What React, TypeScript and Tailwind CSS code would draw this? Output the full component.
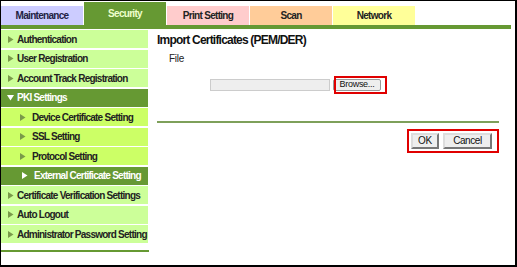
import React from 'react';

const tabs = [
  { label: 'Maintenance', cls: 'h-[19px] bg-[#ccccff] text-[#222244]' },
  { label: 'Security', cls: 'h-[23px] bg-[#669933] text-[#eeffcc]' },
  { label: 'Print Setting', cls: 'h-[19px] bg-[#ffcccc] text-[#222222]' },
  { label: 'Scan', cls: 'h-[19px] bg-[#ffcc99] text-[#222222]' },
  { label: 'Network', cls: 'h-[19px] bg-[#ffff99] text-[#222222]' },
];

type Item = { label: string; kind: 'top' | 'open' | 'sub' | 'active' };

const menu: Item[] = [
  { label: 'Authentication', kind: 'top' },
  { label: 'User Registration', kind: 'top' },
  { label: 'Account Track Registration', kind: 'top' },
  { label: 'PKI Settings', kind: 'open' },
  { label: 'Device Certificate Setting', kind: 'sub' },
  { label: 'SSL Setting', kind: 'sub' },
  { label: 'Protocol Setting', kind: 'sub' },
  { label: 'External Certificate Setting', kind: 'active' },
  { label: 'Certificate Verification Settings', kind: 'top' },
  { label: 'Auto Logout', kind: 'top' },
  { label: 'Administrator Password Setting', kind: 'top' },
];

const Arrow = ({ down, color }: { down?: boolean; color: string }) => (
  <svg width="7" height="7" viewBox="0 0 7 7" className="shrink-0">
    {down ? <polygon points="0,1 7,1 3.5,6.5" fill={color} /> : <polygon points="1,0 6.5,3.5 1,7" fill={color} />}
  </svg>
);

const MenuRow = ({ item }: { item: Item }) => {
  const styles = {
    top: 'bg-[#ccff99] text-[#222222] pl-[6px]',
    open: 'bg-[#669933] text-white pl-[6px]',
    sub: 'bg-[#ccff66] text-[#222222] pl-[18px]',
    active: 'bg-[#669933] text-white pl-[20px]',
  }[item.kind];
  const arrowColor = item.kind === 'open' || item.kind === 'active' ? '#ffffff' : '#7a9a4a';
  return (
    <div className={`h-[18px] flex items-center gap-[3px] whitespace-nowrap overflow-hidden ${styles}`}>
      <Arrow down={item.kind === 'open'} color={arrowColor} />
      <span className={item.kind === 'sub' || item.kind === 'active' ? 'ml-[3px]' : ''}>{item.label}</span>
    </div>
  );
};

export default function App() {
  return (
    <div className="w-[517px] h-[267px] overflow-hidden bg-white border-l border-t border-r-2 border-b-2 border-black font-['Liberation_Sans',Arial,sans-serif]">
      <div className="flex items-end gap-px h-[24px]">
        {tabs.map((t) => (
          <div key={t.label} className={`w-[82px] flex items-center justify-center text-[10px] tracking-[-0.7px] font-bold ${t.cls}`}>
            {t.label}
          </div>
        ))}
      </div>
      <div className="h-[4px] mr-[4px] bg-[#669933]" />
      <div className="flex mt-px">
        <div className="w-[147px] shrink-0">
          <div className="flex flex-col gap-[1.5px] text-[10px] tracking-[-0.75px] font-bold">
            {menu.map((m) => (
              <MenuRow key={m.label} item={m} />
            ))}
          </div>
          <div className="mt-[7px] h-[2px] w-[148px] bg-[#669933]" />
        </div>
        <div className="ml-[9px] w-[342px] pt-[3px]">
          <div className="text-[12px] leading-[15px] tracking-[-0.8px] font-bold text-[#111111]">Import Certificates (PEM/DER)</div>
          <div className="mt-[4px] ml-[12px] text-[10px] leading-[13px] tracking-[-0.3px] text-[#222222]">File</div>
          <div className="mt-[13px] flex items-center h-[13px]">
            <div className="ml-[53px] w-[120px] h-[12px] bg-[#eeeeee] border border-[#cccccc]" />
            <div className="relative ml-[3px]">
              <div className="w-[48px] h-[12px] flex items-center justify-center bg-[#eeeeee] border border-[#999999] rounded-[2px] text-[9px] tracking-[-0.3px] text-[#111111]">
                Browse...
              </div>
              <div className="absolute -top-[3px] left-px w-[53px] h-[18px] border-2 border-[#e00000]" />
            </div>
          </div>
          <div className="mt-[30px] h-[2px] bg-[#7ea05a]" />
          <div className="mt-[6px] flex justify-end">
            <div className="w-[92px] h-[24px] border-2 border-[#e00000] flex items-center justify-end gap-[4px] pr-[5px]">
              <button className="w-[28px] h-[16px] bg-[#eeeeee] border-2 border-t-[#dddddd] border-l-[#dddddd] border-r-[#777777] border-b-[#777777] text-[10px] tracking-[-0.3px] leading-none text-[#111111]">
                OK
              </button>
              <button className="w-[49px] h-[16px] bg-[#eeeeee] border-2 border-t-[#dddddd] border-l-[#dddddd] border-r-[#777777] border-b-[#777777] text-[10px] tracking-[-0.4px] leading-none text-[#111111]">
                Cancel
              </button>
            </div>
          </div>
        </div>
      </div>
    </div>
  );
}
